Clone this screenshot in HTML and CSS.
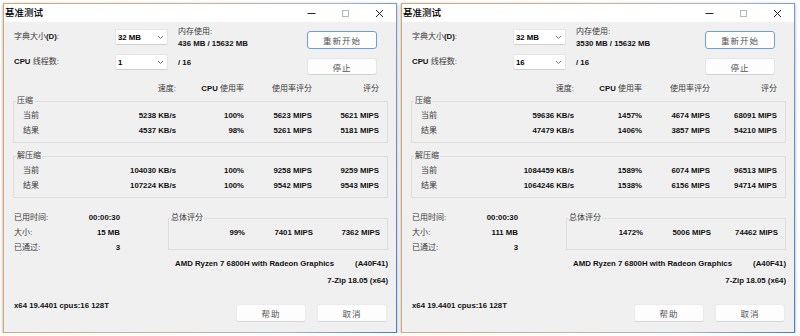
FILE: index.html
```html
<!DOCTYPE html>
<html lang="zh-CN">
<head>
<meta charset="utf-8">
<title>基准测试</title>
<link rel="stylesheet" href="styles.css">
</head>
<body>
<div class="desk">

  <div class="frame">
    <div class="win">
      <div class="titlebar">
        <span class="title">基准测试</span>
        <div class="ctrls">
          <span class="ctl"><svg width="9" height="9" viewBox="0 0 9 9"><path d="M0.5 4.5h8" stroke="#222" stroke-width="1"/></svg></span>
          <span class="ctl"><svg width="8" height="8" viewBox="0 0 8 8"><rect x="1.5" y="1.5" width="6" height="6" fill="none" stroke="#b8b8b8"/></svg></span>
          <span class="ctl"><svg width="9" height="9" viewBox="0 0 9 9"><path d="M1 1l7 7M8 1L1 8" stroke="#222" stroke-width="1"/></svg></span>
        </div>
      </div>
      <div class="body">
        <div class="top">
          <span class="r1"><span class="lb">字典大小</span>(D)<span class="lb">:</span></span>
          <div class="combo r1c"><span>32 MB</span><svg width="7" height="5" viewBox="0 0 7 5"><path d="M1 1l2.5 2.5L6 1" fill="none" stroke="#777"/></svg></div>
          <div class="mem"><span class="lb">内存使用:</span><span>436 MB / 15632 MB</span></div>
          <button class="btn default r1b">重新开始</button>
          <span class="r2">CPU <span class="lb">线程数:</span></span>
          <div class="combo"><span>1</span><svg width="7" height="5" viewBox="0 0 7 5"><path d="M1 1l2.5 2.5L6 1" fill="none" stroke="#777"/></svg></div>
          <span class="threads">/ 16</span>
          <button class="btn r2b">停止</button>
        </div>

        <div class="cols head">
          <span></span><span class="lb num">速度:</span><span class="num">CPU <span class="lb">使用率</span></span><span class="lb num">使用率评分</span><span class="lb num">评分</span>
        </div>

        <fieldset class="group">
          <legend class="lb">压缩</legend>
          <div class="rows">
            <div class="cols"><span class="lb">当前</span><span class="num">5238 KB/s</span><span class="num">100%</span><span class="num">5623 MIPS</span><span class="num">5621 MIPS</span></div>
            <div class="cols"><span class="lb">结果</span><span class="num">4537 KB/s</span><span class="num">98%</span><span class="num">5261 MIPS</span><span class="num">5181 MIPS</span></div>
          </div>
        </fieldset>

        <fieldset class="group g2">
          <legend class="lb">解压缩</legend>
          <div class="rows">
            <div class="cols"><span class="lb">当前</span><span class="num">104030 KB/s</span><span class="num">100%</span><span class="num">9258 MIPS</span><span class="num">9259 MIPS</span></div>
            <div class="cols"><span class="lb">结果</span><span class="num">107224 KB/s</span><span class="num">100%</span><span class="num">9542 MIPS</span><span class="num">9543 MIPS</span></div>
          </div>
        </fieldset>

        <div class="stats">
          <div class="kv">
            <span class="lb">已用时间:</span><span class="num">00:00:30</span>
            <span class="lb">大小:</span><span class="num">15 MB</span>
            <span class="lb">已通过:</span><span class="num">3</span>
          </div>
          <fieldset class="total">
            <legend class="lb">总体评分</legend>
            <div class="trow"><span></span><span class="num">99%</span><span class="num">7401 MIPS</span><span class="num">7362 MIPS</span></div>
          </fieldset>
        </div>

        <div class="cpu"><span>AMD Ryzen 7 6800H with Radeon Graphics</span><span>(A40F41)</span></div>
        <div class="ver">7-Zip 18.05 (x64)</div>

        <div class="bottom">
          <span class="info">x64 19.4401 cpus:16 128T</span>
          <div class="btns"><button class="btn">帮助</button><button class="btn">取消</button></div>
        </div>
      </div>
    </div>
  </div>

  <div class="frame">
    <div class="win">
      <div class="titlebar">
        <span class="title">基准测试</span>
        <div class="ctrls">
          <span class="ctl"><svg width="9" height="9" viewBox="0 0 9 9"><path d="M0.5 4.5h8" stroke="#222" stroke-width="1"/></svg></span>
          <span class="ctl"><svg width="8" height="8" viewBox="0 0 8 8"><rect x="1.5" y="1.5" width="6" height="6" fill="none" stroke="#b8b8b8"/></svg></span>
          <span class="ctl"><svg width="9" height="9" viewBox="0 0 9 9"><path d="M1 1l7 7M8 1L1 8" stroke="#222" stroke-width="1"/></svg></span>
        </div>
      </div>
      <div class="body">
        <div class="top">
          <span class="r1"><span class="lb">字典大小</span>(D)<span class="lb">:</span></span>
          <div class="combo r1c"><span>32 MB</span><svg width="7" height="5" viewBox="0 0 7 5"><path d="M1 1l2.5 2.5L6 1" fill="none" stroke="#777"/></svg></div>
          <div class="mem"><span class="lb">内存使用:</span><span>3530 MB / 15632 MB</span></div>
          <button class="btn default r1b">重新开始</button>
          <span class="r2">CPU <span class="lb">线程数:</span></span>
          <div class="combo"><span>16</span><svg width="7" height="5" viewBox="0 0 7 5"><path d="M1 1l2.5 2.5L6 1" fill="none" stroke="#777"/></svg></div>
          <span class="threads">/ 16</span>
          <button class="btn r2b">停止</button>
        </div>

        <div class="cols head">
          <span></span><span class="lb num">速度:</span><span class="num">CPU <span class="lb">使用率</span></span><span class="lb num">使用率评分</span><span class="lb num">评分</span>
        </div>

        <fieldset class="group">
          <legend class="lb">压缩</legend>
          <div class="rows">
            <div class="cols"><span class="lb">当前</span><span class="num">59636 KB/s</span><span class="num">1457%</span><span class="num">4674 MIPS</span><span class="num">68091 MIPS</span></div>
            <div class="cols"><span class="lb">结果</span><span class="num">47479 KB/s</span><span class="num">1406%</span><span class="num">3857 MIPS</span><span class="num">54210 MIPS</span></div>
          </div>
        </fieldset>

        <fieldset class="group g2">
          <legend class="lb">解压缩</legend>
          <div class="rows">
            <div class="cols"><span class="lb">当前</span><span class="num">1084459 KB/s</span><span class="num">1589%</span><span class="num">6074 MIPS</span><span class="num">96513 MIPS</span></div>
            <div class="cols"><span class="lb">结果</span><span class="num">1064246 KB/s</span><span class="num">1538%</span><span class="num">6156 MIPS</span><span class="num">94714 MIPS</span></div>
          </div>
        </fieldset>

        <div class="stats">
          <div class="kv">
            <span class="lb">已用时间:</span><span class="num">00:00:30</span>
            <span class="lb">大小:</span><span class="num">111 MB</span>
            <span class="lb">已通过:</span><span class="num">3</span>
          </div>
          <fieldset class="total">
            <legend class="lb">总体评分</legend>
            <div class="trow"><span></span><span class="num">1472%</span><span class="num">5006 MIPS</span><span class="num">74462 MIPS</span></div>
          </fieldset>
        </div>

        <div class="cpu"><span>AMD Ryzen 7 6800H with Radeon Graphics</span><span>(A40F41)</span></div>
        <div class="ver">7-Zip 18.05 (x64)</div>

        <div class="bottom">
          <span class="info">x64 19.4401 cpus:16 128T</span>
          <div class="btns"><button class="btn">帮助</button><button class="btn">取消</button></div>
        </div>
      </div>
    </div>
  </div>

</div>
</body>
</html>
```

FILE: styles.css
```css
* { box-sizing: border-box; }

body {
  margin: 0;
  background: #ffffff;
  font-family: "Liberation Sans", "Noto Sans CJK SC", sans-serif;
  font-size: 7.8px;
  font-weight: 700;
  color: #111;
}

.desk {
  display: flex;
  gap: 4px;
  padding: 3px 0 0 3px;
}

.frame {
  width: 394px;
  height: 330px;
  padding: 1px;
  background: linear-gradient(100deg, #d9a468 0%, #cdb49c 45%, #a9b4cc 75%, #3f7fd2 100%);
  box-shadow: 0 1px 3px rgba(0, 0, 0, 0.35);
}

.win {
  height: 100%;
  display: flex;
  flex-direction: column;
  background: #f0f0f0;
}

.titlebar {
  height: 18px;
  flex: none;
  background: #ffffff;
  display: flex;
  align-items: center;
  justify-content: space-between;
}

.title {
  padding-left: 1px;
  font-size: 9.5px;
  font-weight: 500;
  color: #000;
  line-height: 18px;
}

.ctrls { display: flex; }

.ctl {
  width: 34px;
  height: 18px;
  display: flex;
  align-items: center;
  justify-content: center;
}

.body {
  flex: 1;
  padding: 0 8px 0 9px;
  display: flex;
  flex-direction: column;
}

.lb {
  font-weight: 400;
  font-size: 8px;
  color: #3a3a3a;
}

.num { text-align: right; white-space: nowrap; }

/* top section */
.top {
  display: grid;
  grid-template-columns: 101px 53px 139px 70px;
  grid-template-rows: 24px 21px;
  row-gap: 4px;
  padding: 4px 0 0 1px;
}

.r1, .r2 { line-height: 16px; }
.r1 { margin-top: 3px; }

.combo {
  height: 16px;
  width: 53px;
  background: #ffffff;
  border: 1px solid #e4e4e4;
  border-bottom-color: #cfcfcf;
  border-radius: 2px;
  display: flex;
  align-items: center;
  justify-content: space-between;
  padding: 0 3px 0 2px;
}
.combo span { color: #000; }
.r1c { margin-top: 3px; }

.mem {
  display: flex;
  flex-direction: column;
  line-height: 12px;
  padding-left: 10px;
}

.threads {
  padding-left: 10px;
  line-height: 16px;
  margin-top: 1px;
}

.btn {
  font-family: "Liberation Sans", "Noto Sans CJK SC", sans-serif;
  font-size: 8.5px;
  font-weight: 400;
  letter-spacing: 1px;
  color: #555;
  width: 70px;
  height: 18px;
  padding: 0;
  background: #fdfdfd;
  border: 1px solid #e6e6e6;
  border-bottom-color: #d2d2d2;
  border-radius: 3px;
}
.btn.default { border: 1px solid #6b9fd8; }
.r1b { margin-top: 5px; }
.r2b { margin-top: 4px; height: 17px; }

/* tables */
.cols {
  display: grid;
  grid-template-columns: 60px 93px 68px 68px 67px;
  line-height: 15px;
}

.head {
  margin: 8px 0 0 10px;
  line-height: 12px;
}

.group {
  margin: 0;
  padding: 0;
  border: 1px solid #dedede;
  min-width: 0;
}
.group legend,
.total legend {
  padding: 0 1px;
  margin-left: 2px;
  line-height: 12px;
}
.rows { padding: 1px 0 4px 9px; }
.g2 { margin-top: 7px; }

.stats {
  display: grid;
  grid-template-columns: 155px 220px;
  margin-top: 12px;
}

.kv {
  display: grid;
  grid-template-columns: 50px 56px;
  grid-auto-rows: 15px;
  line-height: 15px;
  padding-left: 1px;
  align-self: start;
}

.total {
  margin: 2px 0 0 0;
  padding: 0;
  border: 1px solid #dedede;
  min-width: 0;
  align-self: start;
}
.total legend { margin-left: 1px; }

.trow {
  display: grid;
  grid-template-columns: 8px 68px 68px 67px;
  line-height: 15px;
  padding: 1px 0 9px 0;
}

.cpu {
  display: flex;
  justify-content: space-between;
  margin-top: 3px;
  padding-left: 162px;
  line-height: 12px;
}

.ver {
  margin-top: 5px;
  text-align: right;
  line-height: 12px;
}

.bottom {
  display: flex;
  justify-content: space-between;
  align-items: flex-start;
  margin-top: 13px;
  padding-left: 1px;
}

.info { line-height: 12px; }

.btns {
  display: flex;
  gap: 11px;
  margin-top: 4px;
  margin-right: 1px;
}
.btns .btn { border-color: #ebebeb; border-bottom-color: #d8d8d8; }
```
